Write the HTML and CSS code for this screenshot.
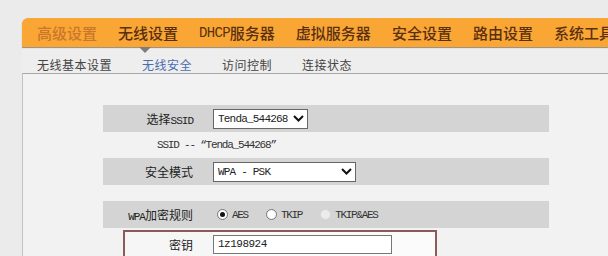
FILE: index.html
```html
<!DOCTYPE html>
<html lang="zh-CN">
<head>
    <meta charset="UTF-8">
    <meta name="viewport" content="width=device-width, initial-scale=1.0">
    <title>无线安全</title>
    <link rel="stylesheet" href="styles.css">
</head>
<body>

<div class="wrap">
    <!-- main menu -->
    <div class="nav">
        <span class="tab first">高级设置</span>
        <span class="tab on">无线设置</span>
        <span class="tab"><span class="en">DHCP</span>服务器</span>
        <span class="tab">虚拟服务器</span>
        <span class="tab">安全设置</span>
        <span class="tab">路由设置</span>
        <span class="tab">系统工具</span>
    </div>

    <div class="subnav">
        <span>无线基本设置</span>
        <span class="on">无线安全</span>
        <span>访问控制</span>
        <span>连接状态</span>
    </div>

    <div class="panel">
        <div class="row band">
            <div class="label">选择<span class="en">SSID</span></div>
            <div class="field">
                <div class="select short">
                    <span>Tenda_544268</span>
                    <svg width="11" height="7" viewBox="0 0 11 7"><path d="M1 1 L5.5 5.5 L10 1" fill="none" stroke="#111" stroke-width="2"/></svg>
                </div>
            </div>
        </div>

        <div class="row note">SSID -- “Tenda_544268”</div>

        <div class="row band">
            <div class="label">安全模式</div>
            <div class="field">
                <div class="select long">
                    <span>WPA - PSK</span>
                    <svg width="11" height="7" viewBox="0 0 11 7"><path d="M1 1 L5.5 5.5 L10 1" fill="none" stroke="#111" stroke-width="2"/></svg>
                </div>
            </div>
        </div>

        <div class="row band gap">
            <div class="label"><span class="en">WPA</span>加密规则</div>
            <div class="field radios">
                <label class="radio"><i class="dot checked"></i>AES</label>
                <label class="radio"><i class="dot"></i>TKIP</label>
                <label class="radio off"><i class="dot"></i>TKIP&amp;AES</label>
            </div>
        </div>

        <div class="row key">
            <div class="label">密钥</div>
            <div class="field">
                <div class="input">1z198924</div>
            </div>
        </div>
    </div>
</div>

</body>
</html>
```

FILE: styles.css
```css
body {
    margin: 0;
    background-color: #ebebeb;
    font-family: "Noto Sans CJK SC", sans-serif;
    color: #222;
}
.wrap {
    padding: 18px 0 0 22px;
    height: 238px;
    display: flex;
    flex-direction: column;
}
.en {
    font-family: "Liberation Mono", monospace;
}

/* main menu */
.nav {
    display: flex;
    align-items: stretch;
    gap: 21px;
    height: 32px;
    padding-left: 15px;
    background-color: #f9a634;
    border-radius: 6px 0 0 0;
    box-shadow: 0 1px 1px #9a8a78;
    position: relative;
}
.tab {
    display: flex;
    align-items: center;
    font-size: 15px;
    font-weight: 500;
    color: #5a3010;
    white-space: nowrap;
    position: relative;
}
.tab .en {
    font-size: 14px;
    letter-spacing: -0.7px;
}
.tab.first {
    color: #c9772e;
}
.tab.on::after {
    content: "";
    position: absolute;
    top: 100%;
    left: 50%;
    margin-left: -9px;
    border-left: 6px solid transparent;
    border-right: 6px solid transparent;
    border-top: 6px solid #7d7d7d;
    z-index: 2;
}

/* sub menu */
.subnav {
    display: flex;
    align-items: center;
    gap: 30px;
    height: 26px;
    margin-top: 1px;
    padding: 8px 0 0 15px;
    box-sizing: border-box;
    font-size: 12px;
    letter-spacing: 0.5px;
    color: #444;
    background-color: #eeeeee;
}
.subnav .on {
    color: #4a6cb0;
}

/* content */
.panel {
    flex: 1;
    background-color: #f2f2f2;
    border-top: 1px solid #a8a8a8;
    border-left: 1px solid #c2c2c2;
    padding: 31px 0 0 80px;
}
.row {
    display: flex;
    align-items: center;
    width: 446px;
    height: 27px;
    font-size: 12px;
}
.band {
    background-color: #d4d4d4;
}
.band.gap {
    margin-top: 16px;
}
.label {
    width: 110px;
    padding-right: 20px;
    box-sizing: border-box;
    text-align: right;
    flex-shrink: 0;
}
.label .en {
    font-size: 11px;
    letter-spacing: -1px;
}
.field {
    display: flex;
    align-items: center;
}
.note {
    height: 26px;
    padding-left: 54px;
    box-sizing: border-box;
    font-family: "Liberation Mono", monospace;
    font-size: 11px;
    letter-spacing: -1.2px;
    color: #333;
}

.select {
    display: flex;
    align-items: center;
    justify-content: space-between;
    height: 20px;
    box-sizing: border-box;
    padding: 0 3px 0 4px;
    background-color: #fff;
    border: 1px solid #666;
    font-family: "Liberation Mono", monospace;
    font-size: 11px;
    letter-spacing: -0.8px;
}
.select.short {
    width: 95px;
}
.select.long {
    width: 143px;
}

.radios {
    gap: 18px;
    padding-left: 4px;
}
.radio {
    display: flex;
    align-items: center;
    gap: 4px;
    font-family: "Liberation Mono", monospace;
    font-size: 11px;
    letter-spacing: -1.3px;
    color: #333;
}
.dot {
    width: 11px;
    height: 11px;
    box-sizing: border-box;
    border-radius: 50%;
    border: 1px solid #7a7a7a;
    background: radial-gradient(circle, #fff 50%, #e4e4e4 100%);
    display: flex;
    align-items: center;
    justify-content: center;
}
.dot.checked::after {
    content: "";
    width: 5px;
    height: 5px;
    border-radius: 50%;
    background-color: #111;
}
.radio.off .dot {
    border-color: #d6d6d6;
    background: #ececec;
}

/* highlighted key row */
.row.key {
    width: 310px;
    height: 24px;
    margin: 2px 0 0 20px;
    border: 2px solid #8e5a57;
    border-bottom: none;
    background-color: #fbfbfb;
}
.key .label {
    width: 88px;
    background-color: #f6f6f6;
    align-self: stretch;
    display: flex;
    align-items: center;
    justify-content: flex-end;
}
.input {
    width: 179px;
    height: 19px;
    box-sizing: border-box;
    padding-left: 4px;
    display: flex;
    align-items: center;
    background-color: #fff;
    border: 1px solid #777;
    font-family: "Liberation Mono", monospace;
    font-size: 11px;
    letter-spacing: -0.5px;
}
```
